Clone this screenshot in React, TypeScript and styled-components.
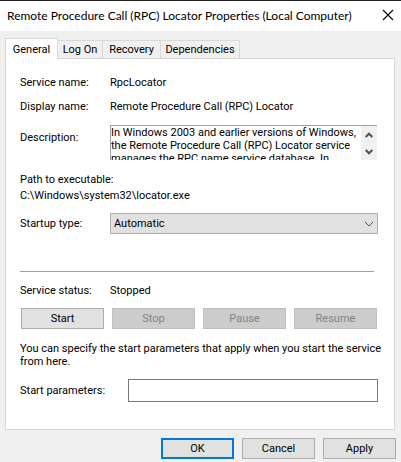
import React from "react";
import styled, { createGlobalStyle } from "styled-components";

const GlobalStyle = createGlobalStyle`
  * { box-sizing: border-box; }
  body {
    margin: 0;
    background: #f0f0f0;
    color: #000;
    font-family: Roboto, "Liberation Sans", Arial, sans-serif;
    font-size: 11px;
    line-height: 13px;
  }
  button, input, select, textarea { font: inherit; color: inherit; margin: 0; border-radius: 0; }
`;

const Dialog = styled.main`
  display: flex;
  flex-direction: column;
  min-height: 100vh;
  border-top: 1px solid #232323;
`;

const TitleBar = styled.header`
  display: flex;
  align-items: center;
  justify-content: space-between;
  height: 30px;
  padding: 0 6px 0 7px;
  background: #fff;
`;

const Title = styled.h1`
  margin: 0;
  font: 12px/16px Lato, "Open Sans", sans-serif;
  white-space: nowrap;
`;

const CloseButton = styled.button`
  display: flex;
  padding: 0 1px 2px;
  border: 0;
  background: none;
`;

const Tabs = styled.div`
  display: flex;
  align-items: flex-end;
  height: 27px;
  margin: 0 6px 0 5px;
`;

const Tab = styled.button<{ $active?: boolean; $width: number }>`
  position: relative;
  width: ${(p) => p.$width}px;
  height: ${(p) => (p.$active ? 21 : 18)}px;
  margin-bottom: ${(p) => (p.$active ? -1 : 0)}px;
  padding: 0;
  border: 1px solid #d9d9d9;
  border-bottom: 0;
  border-left-width: ${(p) => (p.$active ? 1 : 0)}px;
  background: ${(p) => (p.$active ? "#fff" : "#f0f0f0")};
`;

const Panel = styled.section`
  display: flex;
  flex-direction: column;
  margin: 0 6px 0 5px;
  padding: 17px 17px 27px 14px;
  border: 1px solid #d9d9d9;
  background: #fff;
`;

const Row = styled.div<{ $height: number; $label?: number }>`
  display: grid;
  grid-template-columns: ${(p) => p.$label ?? 90}px 1fr;
  align-items: center;
  height: ${(p) => p.$height}px;
`;

const DescriptionRow = styled(Row)`
  align-items: start;
  padding-top: 1px;

  label {
    padding-top: 6px;
  }
`;

const Description = styled.div`
  display: flex;
  height: 35px;
  border: 1px solid #a0a0a0;
  border-width: 1px 0 0 1px;
`;

const DescriptionText = styled.textarea`
  flex: 1;
  min-width: 0;
  padding: 0;
  border: 0;
  outline: 0;
  resize: none;
  overflow: hidden;
  white-space: pre;
  background: #fff;
`;

const Scroller = styled.div`
  display: flex;
  flex-direction: column;
  width: 16px;
  background: #f0f0f0;
`;

const ScrollButton = styled.button`
  display: flex;
  flex: 1;
  align-items: center;
  justify-content: center;
  padding: 0;
  border: 0;
  background: none;
`;

const Path = styled.div`
  padding: 11px 0 9px;
  line-height: 16px;
`;

const SelectBox = styled.div`
  position: relative;
  margin-right: -1px;

  svg {
    position: absolute;
    top: 8px;
    right: 4px;
    pointer-events: none;
  }
`;

const Select = styled.select`
  display: block;
  width: 100%;
  height: 21px;
  padding: 0 3px;
  border: 1px solid #adadad;
  background: #e1e1e1;
  appearance: none;
`;

const Divider = styled.hr`
  width: calc(100% - 3px);
  margin: 37px 0 10px;
  border: 0;
  border-top: 1px solid #a0a0a0;
`;

const Actions = styled.div`
  display: grid;
  grid-template-columns: repeat(4, 1fr);
  gap: 8px;
  margin: 10px 0 13px;
  padding-left: 1px;
`;

const Button = styled.button<{ $primary?: boolean }>`
  height: 21px;
  padding: 0;
  border: ${(p) => (p.$primary ? "2px solid #0078d7" : "1px solid #adadad")};
  background: #e1e1e1;

  &:disabled {
    border-color: #bfbfbf;
    background: #ccc;
    color: #838383;
  }
`;

const Note = styled.p`
  margin: 0 -12px 11px 0;
`;

const TextBox = styled.input`
  width: calc(100% + 1px);
  height: 23px;
  padding: 0 4px;
  border: 1px solid #7a7a7a;
  background: #fff;
`;

const Footer = styled.footer`
  display: grid;
  grid-template-columns: repeat(3, 73px);
  justify-content: end;
  gap: 8px;
  padding: 8px 5px 3px;
`;

const ScrollArrow = ({ up }: { up?: boolean }) => (
  <svg width="8" height="6" viewBox="0 0 8 6" fill="none" stroke="#505050" strokeWidth="2">
    <path d={up ? "M.7 5 4 1.7 7.3 5" : "M.7 1 4 4.3 7.3 1"} />
  </svg>
);

const SelectArrow = () => (
  <svg width="10" height="6" viewBox="0 0 10 6" fill="none" stroke="#505050">
    <path d="M1 1 5 5 9 1" />
  </svg>
);

const description =
  "In Windows 2003 and earlier versions of Windows,\nthe Remote Procedure Call (RPC) Locator service\nmanages the RPC name service database. In";

export default function App() {
  return (
    <>
      <GlobalStyle />
      <Dialog>
        <TitleBar>
          <Title>Remote Procedure Call (RPC) Locator Properties (Local Computer)</Title>
          <CloseButton aria-label="Close">
            <svg width="12" height="12" viewBox="0 0 12 12" stroke="#000" strokeWidth="1.1">
              <path d="M1 1 11 11M11 1 1 11" />
            </svg>
          </CloseButton>
        </TitleBar>
        <Tabs role="tablist">
          <Tab role="tab" aria-selected $active $width={53}>General</Tab>
          <Tab role="tab" $width={45}>Log On</Tab>
          <Tab role="tab" $width={58}>Recovery</Tab>
          <Tab role="tab" $width={79}>Dependencies</Tab>
        </Tabs>
        <Panel>
          <Row $height={13}><span>Service name:</span><span>RpcLocator</span></Row>
          <Row $height={35}><span>Display name:</span><span>Remote Procedure Call (RPC) Locator</span></Row>
          <DescriptionRow $height={37}>
            <label htmlFor="description">Description:</label>
            <Description>
              <DescriptionText id="description" readOnly value={description} />
              <Scroller>
                <ScrollButton aria-label="Scroll up"><ScrollArrow up /></ScrollButton>
                <ScrollButton aria-label="Scroll down"><ScrollArrow /></ScrollButton>
              </Scroller>
            </Description>
          </DescriptionRow>
          <Path>
            <div>Path to executable:</div>
            <div>C:\Windows\system32\locator.exe</div>
          </Path>
          <Row $height={21}>
            <label htmlFor="startup">Startup type:</label>
            <SelectBox>
              <Select id="startup" defaultValue="Automatic">
                <option>Automatic</option>
                <option>Manual</option>
                <option>Disabled</option>
              </Select>
              <SelectArrow />
            </SelectBox>
          </Row>
          <Divider />
          <Row $height={16}><span>Service status:</span><span>Stopped</span></Row>
          <Actions>
            <Button>Start</Button>
            <Button disabled>Stop</Button>
            <Button disabled>Pause</Button>
            <Button disabled>Resume</Button>
          </Actions>
          <Note>
            You can specify the start parameters that apply when you start the service
            <br />
            from here.
          </Note>
          <Row $height={23} $label={108}>
            <label htmlFor="parameters">Start parameters:</label>
            <TextBox id="parameters" type="text" />
          </Row>
        </Panel>
        <Footer>
          <Button $primary>OK</Button>
          <Button>Cancel</Button>
          <Button>Apply</Button>
        </Footer>
      </Dialog>
    </>
  );
}
